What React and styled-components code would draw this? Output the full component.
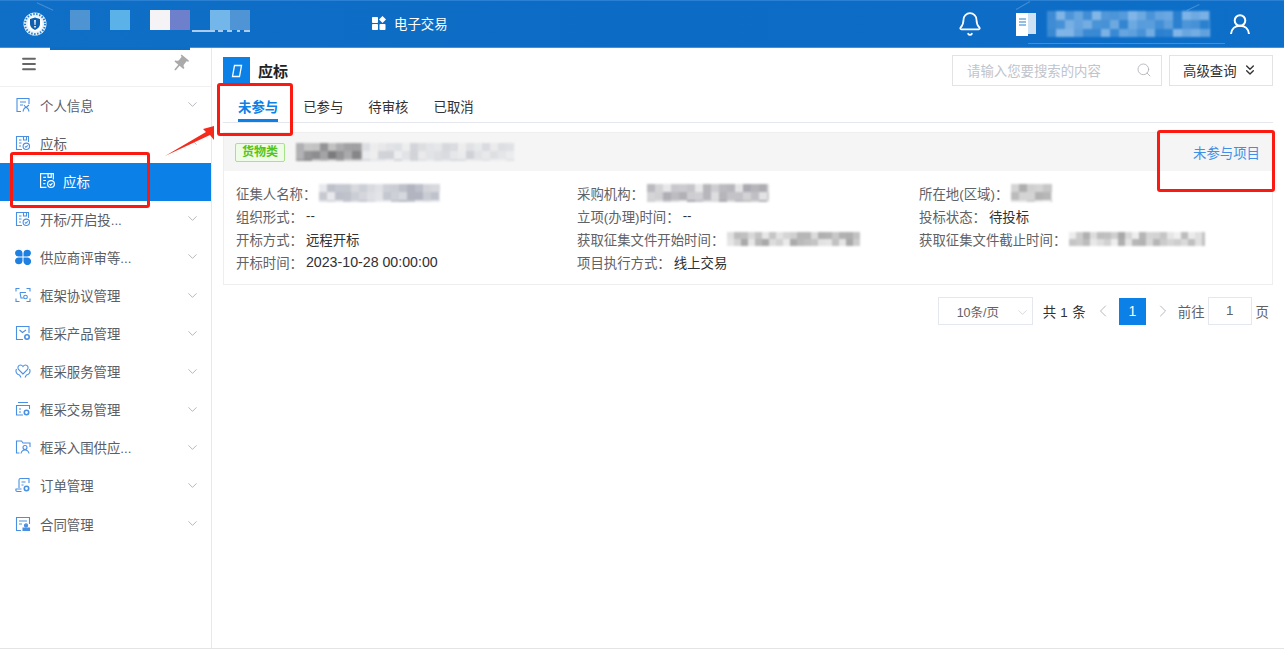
import React from "react";
import styled, { createGlobalStyle } from "styled-components";
import { Bell, ChevronDown, ChevronLeft, ChevronRight, ChevronUp, ChevronsDown, Menu, Search } from "lucide-react";
import { MdPushPin } from "react-icons/md";

const GlobalStyle = createGlobalStyle`
  html, body { margin: 0; padding: 0; background: #fff; }
  body { font-family: "Liberation Sans", "Noto Sans CJK SC", sans-serif; font-size: 13.4px; color: #303133; }
  * { box-sizing: border-box; }
`;

// blurred blocks standing in for the censored text
const Mosaic = ({ w, h, cell = 8, seed = 1, color = "90,90,100", min = 0.1, max = 0.6 }) => {
  const rects = [];
  let s = seed * 9301 + 49297;
  for (let y = 0; y < h; y += cell) {
    for (let x = 0; x < w; x += cell) {
      s = (s * 9301 + 49297) % 233280;
      const o = min + (s / 233280) * (max - min);
      rects.push(<rect key={`${x}-${y}`} x={x} y={y} width={cell} height={cell} fill={`rgb(${color})`} opacity={o} />);
    }
  }
  return (
    <MosaicSvg width={w} height={h} viewBox={`0 0 ${w} ${h}`}>
      {rects}
    </MosaicSvg>
  );
};

const MosaicSvg = styled.svg`
  display: inline-block;
  vertical-align: middle;
  filter: blur(1px);
  flex: none;
`;

const Icon = ({ children, size = 16, color = "#4a90e2" }) => (
  <svg width={size} height={size} viewBox="0 0 16 16" fill="none" stroke={color} strokeWidth="1.1">
    {children}
  </svg>
);

const icons = {
  person: (c, s) => (
    <Icon color={c} size={s}>
      <path d="M14 7V1.500H2v13h4M5 5h6M5 8h3" />
      <path d="M8 14.500c.6-2.500 1.800-4 3-4s2.400 1.500 3 4M9 8l2 2.500L14 8" />
    </Icon>
  ),
  doc: (c, s) => (
    <Icon color={c} size={s}>
      <path d="M7 14.500H1.500v-13h12V7" />
      <path d="M8.500 1.500v3.500h3V1.500M4 5h2.500M4 8h2.500M4 11h2" />
      <circle cx="11.300" cy="11.300" r="3.200" />
      <path d="M9.900 11.300l1 1 1.800-1.900" />
    </Icon>
  ),
  clover: (c, s) => (
    <svg width={s} height={s} viewBox="0 0 16 16" fill={c}>
      <path d="M0 4a3.800 3.800 0 0 1 7.500 0v3.500H4A3.800 3.800 0 0 1 0 4zM8.500 4a3.800 3.800 0 0 1 7.500 0 3.800 3.800 0 0 1-3.800 3.500H8.500zM0 12a3.800 3.800 0 0 1 4-3.500h3.500V12A3.800 3.800 0 0 1 0 12zM8.500 8.500H12a3.800 3.800 0 1 1-3.500 3.500z" />
    </svg>
  ),
  frame: (c, s) => (
    <Icon color={c} size={s}>
      <path d="M1 4.500V1.500h3.500M11.500 1.500H15v3M15 11.500v3h-3.500M4.500 14.500H1v-3" />
      <path d="M5 5.500h6M5 5.500l1 5.500h2.500" />
      <circle cx="10.500" cy="10" r="1.800" />
    </Icon>
  ),
  product: (c, s) => (
    <Icon color={c} size={s}>
      <path d="M8 14.500H1.500v-13h12.500V8" />
      <path d="M4.500 5l3 2.500L11 5" />
      <circle cx="12" cy="12" r="2.200" strokeWidth="1.600" />
    </Icon>
  ),
  heart: (c, s) => (
    <Icon color={c} size={s}>
      <path d="M8 11L3.500 6.500C2 4.500 3.500 2 5.500 2 6.800 2 7.500 2.800 8 3.500 8.500 2.800 9.200 2 10.500 2c2 0 3.500 2.500 2 4.500z" />
      <path d="M1.500 6c-1.500 3 .5 5.500 3 6l1.500 2.500M14.500 6c1.500 3-.5 5.500-3 6L10 14.500" />
    </Icon>
  ),
  trade: (c, s) => (
    <Icon color={c} size={s}>
      <path d="M3 1.500h10M8 14H1.500V4.500h13V8" />
      <path d="M4 8h2M4 11h2" />
      <circle cx="11.500" cy="11.500" r="2.200" strokeWidth="1.600" />
    </Icon>
  ),
  folder: (c, s) => (
    <Icon color={c} size={s}>
      <path d="M4.500 14H1.500V2h5l1.500 2h7v4" />
      <circle cx="10" cy="8.500" r="2" />
      <path d="M6 14.500c.5-2.500 2-3.500 4-3.500s3.500 1 4 3.500" />
    </Icon>
  ),
  order: (c, s) => (
    <Icon color={c} size={s}>
      <path d="M4 11V3c0-1 .5-1.500 1.500-1.500h9M14 1.500V6M6.500 14.500h-4C1 14.500.500 13.500 1 12h5.500" />
      <path d="M6.500 5h4M6.500 8h2" />
      <circle cx="11.500" cy="11.500" r="2.200" strokeWidth="1.600" />
    </Icon>
  ),
  contract: (c, s) => (
    <Icon color={c} size={s}>
      <path d="M6 14.500H1.500v-13h13V8M4 5h8M4 8h3" />
      <circle cx="11" cy="9.500" r="1.600" fill={c} />
      <path d="M8 12h6.500v2.500H8z" fill={c} />
    </Icon>
  ),
};

const menu = [
  { icon: "person", label: "个人信息" },
  { icon: "doc", label: "应标", open: true },
  { icon: "doc", label: "应标", child: true, active: true },
  { icon: "doc", label: "开标/开启投..." },
  { icon: "clover", label: "供应商评审等..." },
  { icon: "frame", label: "框架协议管理" },
  { icon: "product", label: "框采产品管理" },
  { icon: "heart", label: "框采服务管理" },
  { icon: "trade", label: "框采交易管理" },
  { icon: "folder", label: "框采入围供应..." },
  { icon: "order", label: "订单管理" },
  { icon: "contract", label: "合同管理" },
];

const tabs = ["未参与", "已参与", "待审核", "已取消"];

const Page = styled.div`
  width: 1284px;
  height: 649px;
  display: flex;
  flex-direction: column;
  position: relative;
  overflow: hidden;
  border-bottom: 1px solid #e4e4e4;
`;

const Header = styled.header`
  height: 48px;
  flex: none;
  display: flex;
  align-items: center;
  position: relative;
  padding: 0 34px 0 23px;
  color: #fff;
  background: linear-gradient(100deg, #0f6ec6 0%, #0c6bc4 50%, #0e6fc8 100%);
  border-top: 1px solid #2a80d2;
  border-bottom: 1px solid #3a93e4;
`;

const Brand = styled.div`
  display: flex;
  align-items: center;
  width: 349px;
  height: 100%;
`;

const Logo = styled.svg`
  flex: none;
  margin-right: 23px;
`;

const Swatches = styled.div`
  display: flex;
  gap: 20px;
  margin-top: -8px;
`;

const Swatch = styled.div`
  display: flex;
`;

const SwatchCell = styled.span`
  display: block;
  width: 20px;
  height: 20px;
  background: ${(p) => p.$c};
`;

// overhang of the censor bar under the header
const CensorBar = styled.div`
  position: absolute;
  left: 50px;
  top: 46px;
  width: 140px;
  height: 3px;
  background: #0d6cc4;
  z-index: 2;
`;

// bottom edge of the site title that sticks out below the censor squares
const TitleScrap = styled.div`
  position: absolute;
  left: 192px;
  top: 29px;
  width: 58px;
  height: 2px;
  background: linear-gradient(
    90deg,
    #fff 0 23px,
    transparent 23px 26px,
    #fff 26px 31px,
    transparent 31px 35px,
    #fff 35px 40px,
    transparent 40px 45px,
    #fff 45px 48px,
    transparent 48px 52px,
    #fff 52px 58px
  );
  opacity: 0.65;
`;

const Streak = styled.span`
  position: absolute;
  left: ${(p) => p.$x}px;
  top: ${(p) => p.$y}px;
  width: ${(p) => p.$w}px;
  height: 1px;
  background: rgba(255, 255, 255, 0.22);
  transform: rotate(${(p) => p.$r}deg);
`;

const HeaderNav = styled.div`
  display: flex;
  align-items: center;
  gap: 8px;
  margin-top: -2px;
  font-size: 13.4px;
`;

const HeaderRight = styled.div`
  margin-left: auto;
  display: flex;
  align-items: center;
`;

const BookWrap = styled.div`
  display: flex;
  align-items: center;
  gap: 11px;
  margin: 0 20px 0 33px;
`;

const Body = styled.div`
  flex: 1;
  display: flex;
  min-height: 0;
`;

const Sidebar = styled.aside`
  width: 212px;
  flex: none;
  border-right: 1px solid #e8e8e8;
`;

const SideTop = styled.div`
  height: 38.500px;
  display: flex;
  align-items: center;
  justify-content: space-between;
  padding: 0 21px 6px 20px;
  border-bottom: 1px solid #f0f0f0;
  color: #666;
`;

const NavItem = styled.div`
  height: 38.100px;
  display: flex;
  align-items: center;
  gap: ${(p) => (p.$child ? "7px" : "9px")};
  padding: 0 11px 2px ${(p) => (p.$child ? "39px" : "15px")};
  font-size: 13.4px;
  color: ${(p) => (p.$active ? "#fff" : "#5a5e66")};
  background: ${(p) => (p.$active ? "#0b80e6" : "transparent")};
`;

const NavArrow = styled.span`
  margin-left: auto;
  display: flex;
  color: #a4a8ae;
`;

const Main = styled.main`
  flex: 1;
  min-width: 0;
  padding: 7px 11px 0 11px;
`;

const TitleRow = styled.div`
  display: flex;
  align-items: flex-start;
  height: 32px;
`;

const TitleIcon = styled.div`
  width: 27px;
  height: 27px;
  margin-top: 2px;
  background: #0b80e6;
  display: flex;
  align-items: center;
  justify-content: center;
`;

const PageTitle = styled.h1`
  margin: 7px 0 0 8px;
  font-size: 15px;
  line-height: 20px;
  font-weight: 700;
  color: #222;
`;

const SearchBox = styled.div`
  margin-left: auto;
  width: 210px;
  height: 31px;
  border: 1px solid #e3e3e3;
  display: flex;
  align-items: center;
  justify-content: space-between;
  padding: 0 9px 2px 14px;
  color: #c0c4cc;
`;

const QueryButton = styled.div`
  margin-left: 7px;
  width: 104px;
  height: 31px;
  border: 1px solid #e3e3e3;
  display: flex;
  align-items: center;
  gap: 5px;
  padding: 0 0 1px 13px;
  color: #303133;
`;

const Tabs = styled.div`
  height: 36px;
  display: flex;
  gap: 25px;
  padding-left: 15px;
  border-bottom: 1px solid #e4e7ed;
`;

const Tab = styled.div`
  height: 35px;
  line-height: 41px;
  font-weight: ${(p) => (p.$active ? 700 : 400)};
  color: ${(p) => (p.$active ? "#0b80e6" : "#303133")};
  border-bottom: ${(p) => (p.$active ? "3px solid #0b80e6" : "none")};
`;

const Card = styled.section`
  margin-top: 9px;
  height: 153px;
  border: 1px solid #eeeeee;
`;

const CardHead = styled.div`
  height: 38px;
  background: #f5f5f5;
  display: flex;
  align-items: center;
  padding: 0 12px 0 11px;
`;

const Tag = styled.span`
  width: 50px;
  height: 19px;
  line-height: 17px;
  text-align: center;
  font-size: 12px;
  font-weight: 700;
  color: #52c41a;
  background: #eefbe6;
  border: 1px solid #a6e38a;
  border-radius: 2px;
  margin-right: 11px;
`;

const CardLink = styled.a`
  margin-left: auto;
  color: #3f8fe8;
`;

const Details = styled.div`
  display: grid;
  grid-template-columns: 341px 342px 342px;
  grid-auto-rows: 23px;
  padding: 10px 0 0 12px;
`;

const Field = styled.div`
  display: flex;
  align-items: center;
  white-space: nowrap;
`;

const Label = styled.span`
  color: #606266;
  margin-right: 3px;
`;

const DateValue = styled.span`
  font-size: 14.200px;
`;

const Pager = styled.div`
  margin-top: 12px;
  display: flex;
  align-items: center;
  justify-content: flex-end;
  height: 28px;
  padding-right: 4px;
  color: #606266;
`;

const PageSize = styled.div`
  width: 95px;
  height: 28px;
  border: 1px solid #e4e7ed;
  display: flex;
  align-items: center;
  justify-content: space-between;
  padding: 0 2px 0 18px;
  font-size: 12.500px;
  color: #606266;
  svg { color: #c0c4cc; margin: 2px 0 0; }
`;

const Total = styled.span`
  margin: 0 7px 0 10px;
  color: #303133;
  letter-spacing: 0.3px;
`;

const PagerArrow = styled.span`
  display: flex;
  color: #b4b8bf;
  margin: ${(p) => p.$m};
`;

const PageNum = styled.span`
  width: 27px;
  height: 27px;
  background: #0b80e6;
  color: #fff;
  font-weight: 500;
  font-size: 14px;
  line-height: 27px;
  text-align: center;
`;

const JumpInput = styled.span`
  width: 44px;
  height: 28px;
  margin: 0 4px 0 3px;
  border: 1px solid #e4e7ed;
  text-align: center;
  line-height: 26px;
  color: #606266;
`;

// red annotation boxes + arrow drawn on top of the screenshot
const Mark = styled.div`
  position: absolute;
  left: ${(p) => p.$x}px;
  top: ${(p) => p.$y}px;
  width: ${(p) => p.$w}px;
  height: ${(p) => p.$h}px;
  border: 3px solid #fb1a12;
  border-radius: 3px;
  z-index: 3;
`;

const ArrowSvg = styled.svg`
  position: absolute;
  left: 160px;
  top: 120px;
  z-index: 3;
`;

const Row = ({ label, children }) => (
  <Field>
    <Label>{label}：</Label>
    {children}
  </Field>
);

export default function App() {
  return (
    <>
      <GlobalStyle />
      <Page>
        <Header>
          <Streak $x={36} $y={5} $w={18} $r={25} />
          <Streak $x={1015} $y={4} $w={16} $r={-30} />
          <Streak $x={1186} $y={6} $w={14} $r={-25} />
          <Streak $x={1028} $y={42} $w={197} $r={0} />
          <Brand>
            <Logo width="24" height="24" viewBox="0 0 24 24">
              <circle cx="12" cy="12" r="11.500" fill="#e8f3fb" />
              <circle cx="12" cy="12" r="10" fill="none" stroke="#2a80c8" strokeWidth="2" strokeDasharray="1.500 1.500" />
              <circle cx="12" cy="12" r="7.500" fill="#fff" />
              <path d="M12 5.500l5 1.500v5c0 3-2.500 5-5 6-2.500-1-5-3-5-6V7z" fill="#0e5fae" />
              <path d="M11.200 8h1.600l-.3 5h-1zM11.200 14h1.600v1.500h-1.600z" fill="#fff" />
            </Logo>
            <Swatches>
              <Swatch><SwatchCell $c="#4e94d3" /></Swatch>
              <Swatch><SwatchCell $c="#5ab2e8" /></Swatch>
              <Swatch><SwatchCell $c="#f6f3f6" /><SwatchCell $c="#6e80cb" /></Swatch>
              <Swatch><SwatchCell $c="#72b6ea" /><SwatchCell $c="#4f95d6" /></Swatch>
            </Swatches>
            <TitleScrap />
            <CensorBar />
          </Brand>
          <HeaderNav>
            <svg width="14" height="14" viewBox="0 0 14 14" fill="#fff">
              <rect x="0" y="1" width="6" height="6" rx="0.800" />
              <rect x="0" y="8" width="6" height="6" rx="0.800" />
              <rect x="7.500" y="8" width="6" height="6" rx="0.800" />
              <path d="M10.500 0l3.500 3.500-3.500 3.500L7 3.500z" />
            </svg>
            电子交易
          </HeaderNav>
          <HeaderRight>
            <Bell size={26} strokeWidth={1.6} />
            <BookWrap>
              <svg width="20" height="23" viewBox="0 0 20 23">
                <path d="M0 0h12v23H0z" fill="#fff" />
                <path d="M12 0h8v21h-8z" fill="#cfe2f4" />
                <path d="M3 6h7M3 9h7M3 12h7" stroke="#2a80c8" strokeWidth="1.200" />
              </svg>
              <Mosaic w={163} h={26} cell={9} seed={3} color="200,225,250" min={0.15} max={0.65} />
            </BookWrap>
            <svg width="20" height="20" viewBox="0 0 20 20" fill="none" stroke="#fff" strokeWidth="2">
              <circle cx="10" cy="6.500" r="5.300" />
              <path d="M1 20c.5-5 4-8.200 9-8.200s8.500 3.200 9 8.200" />
            </svg>
          </HeaderRight>
        </Header>
        <Body>
          <Sidebar>
            <SideTop>
              <Menu size={18} strokeWidth={2.4} />
              <MdPushPin size={20} color="#aaa" style={{ transform: "rotate(40deg)" }} />
            </SideTop>
            {menu.map((item, i) => (
              <NavItem key={i} $active={item.active} $child={item.child}>
                {icons[item.icon](item.active ? "#fff" : item.icon === "clover" ? "#1e80e0" : "#4a90e2", item.active ? 17 : 16)}
                {item.label}
                {!item.child && (
                  <NavArrow>
                    {item.open ? <ChevronUp size={15} strokeWidth={1.3} /> : <ChevronDown size={15} strokeWidth={1.3} />}
                  </NavArrow>
                )}
              </NavItem>
            ))}
          </Sidebar>
          <Main>
            <TitleRow>
              <TitleIcon>
                <svg width="14" height="14" viewBox="0 0 14 14" fill="none" stroke="#fff" strokeWidth="1.300">
                  <path d="M4.500 1.500h7l-2 11h-7z" />
                </svg>
              </TitleIcon>
              <PageTitle>应标</PageTitle>
              <SearchBox>
                请输入您要搜索的内容
                <Search size={16} strokeWidth={1.2} color="#a8abb2" />
              </SearchBox>
              <QueryButton>
                高级查询
                <ChevronsDown size={16} strokeWidth={2} />
              </QueryButton>
            </TitleRow>
            <Tabs>
              {tabs.map((t, i) => (
                <Tab key={t} $active={i === 0}>{t}</Tab>
              ))}
            </Tabs>
            <Card>
              <CardHead>
                <Tag>货物类</Tag>
                <Mosaic w={66} h={18} cell={8} seed={2} color="70,70,75" min={0.2} max={0.7} />
                <Mosaic w={152} h={18} cell={8} seed={7} color="150,155,170" min={0.05} max={0.4} />
                <CardLink>未参与项目</CardLink>
              </CardHead>
              <Details>
                <Row label="征集人名称">
                  <Mosaic w={121} h={18} cell={8} seed={4} color="120,125,145" min={0.15} max={0.6} />
                </Row>
                <Row label="采购机构">
                  <Mosaic w={122} h={18} cell={8} seed={6} color="110,110,120" min={0.15} max={0.6} />
                </Row>
                <Row label="所在地(区域)">
                  <Mosaic w={41} h={18} cell={8} seed={8} color="110,110,110" min={0.1} max={0.6} />
                </Row>
                <Row label="组织形式">--</Row>
                <Row label="立项(办理)时间">--</Row>
                <Row label="投标状态">待投标</Row>
                <Row label="开标方式">远程开标</Row>
                <Row label="获取征集文件开始时间">
                  <Mosaic w={133} h={14} cell={7} seed={9} color="110,110,110" min={0.1} max={0.6} />
                </Row>
                <Row label="获取征集文件截止时间">
                  <Mosaic w={136} h={14} cell={7} seed={10} color="110,110,110" min={0.1} max={0.6} />
                </Row>
                <Row label="开标时间"><DateValue>2023-10-28 00:00:00</DateValue></Row>
                <Row label="项目执行方式">线上交易</Row>
              </Details>
            </Card>
            <Pager>
              <PageSize>
                10条/页
                <ChevronDown size={15} strokeWidth={1} />
              </PageSize>
              <Total>共 1 条</Total>
              <PagerArrow $m="0 6px 0 0"><ChevronLeft size={20} strokeWidth={1.2} /></PagerArrow>
              <PageNum>1</PageNum>
              <PagerArrow $m="0 5px 0 7px"><ChevronRight size={20} strokeWidth={1.2} /></PagerArrow>
              前往
              <JumpInput>1</JumpInput>
              页
            </Pager>
          </Main>
        </Body>
        <Mark $x={217} $y={83} $w={76} $h={53} />
        <Mark $x={10} $y={152} $w={140} $h={56} />
        <Mark $x={1157} $y={130} $w={118} $h={62} />
        <ArrowSvg width="60" height="40" viewBox="0 0 60 40">
          <path d="M5 36L46 12 43 9 54 6 54 20 50 15z" fill="#f52a1c" />
        </ArrowSvg>
      </Page>
    </>
  );
}
